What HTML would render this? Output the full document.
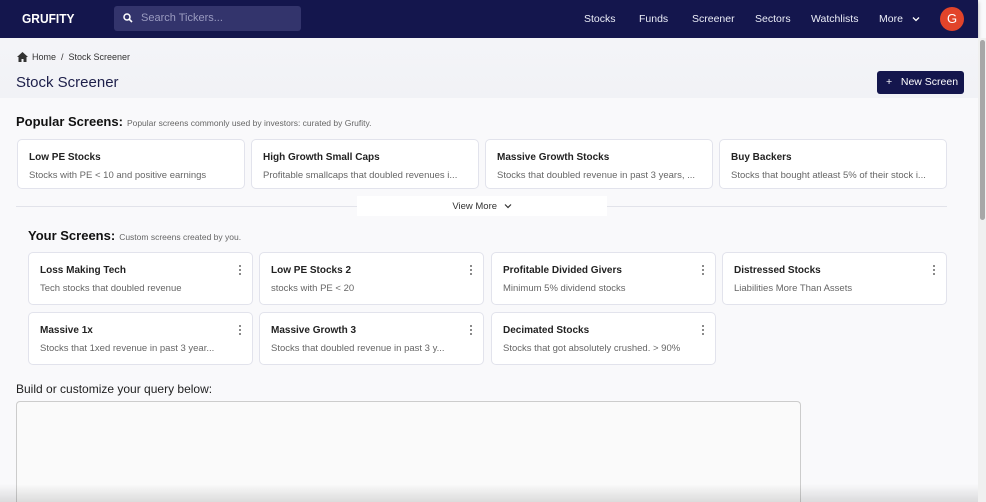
<!DOCTYPE html><html><head><style>
*{box-sizing:border-box;margin:0;padding:0}
html{width:986px;height:502px;overflow:hidden}
body{width:986px;height:502px;overflow:hidden;background:#f9f9fb;font-family:"Liberation Sans",sans-serif;position:relative;color:#222}
.nav{position:absolute;left:0;top:0;width:978px;height:38px;background:#14164d;box-shadow:0 2px 4px rgba(0,0,0,.3)}
.logo{position:absolute;left:22px;top:11px;color:#fff;font-weight:bold;font-size:13px;letter-spacing:0;transform:scaleX(.92);transform-origin:left}
.search{position:absolute;left:114px;top:6px;width:187px;height:25px;background:#33346c;border-radius:3px;color:#9a9bc0;font-size:11px;padding:6px 0 0 27px}
.nl{position:absolute;top:13px;color:#eceef8;font-size:10.5px}
.av{position:absolute;left:940px;top:7px;width:24px;height:24px;border-radius:50%;background:#e2442a;color:#fff;font-size:13px;text-align:center;line-height:24px}
.hdr{position:absolute;left:0;top:38px;width:978px;height:60px;background:linear-gradient(#f4f4f8,#f1f2f6)}
.crumb{position:absolute;left:32px;top:52px;font-size:9px;color:#333}
h1{position:absolute;left:16px;top:74px;font-size:15px;font-weight:normal;color:#1d1f4a}
.btn{position:absolute;left:877px;top:71px;width:87px;height:23px;background:#14164d;color:#fff;font-size:10.5px;border-radius:3px;padding:5px 0 0 9px}
.sec{position:absolute;font-size:13px;font-weight:bold;color:#111}
.sec span{font-size:8.5px;font-weight:normal;color:#666;margin-left:4px}
.card{position:absolute;background:#fff;border:1px solid #e2e3ec;border-radius:5px;padding:0 11px}
.card b{display:block;font-size:10px;color:#222;margin-top:12px}
.card p{font-size:9.5px;color:#666;margin-top:7px;white-space:nowrap;overflow:hidden}
.dots{position:absolute;right:10px;top:12px;width:3px}
.dots i{display:block;width:2px;height:2px;background:#666;border-radius:50%;margin-bottom:2px}
.sb{position:absolute;left:978px;top:38px;width:8px;height:464px;background:#f0f0f0}
.th{position:absolute;left:980px;top:40px;width:5px;height:180px;background:#a7a7a7;border-radius:3px}
</style></head><body>
<div class="nav">
<div class="logo">GRUFITY</div>
<div class="search"><svg style="position:absolute;left:9px;top:7px" width="10" height="10" viewBox="0 0 10 10"><circle cx="4" cy="4" r="3" stroke="#fff" stroke-width="1.5" fill="none"/><path d="M6.2 6.2 9 9" stroke="#fff" stroke-width="1.6"/></svg>Search Tickers...</div>
<div class="nl" style="left:584px">Stocks</div><div class="nl" style="left:639px">Funds</div><div class="nl" style="left:692px">Screener</div><div class="nl" style="left:755px">Sectors</div><div class="nl" style="left:811px">Watchlists</div><div class="nl" style="left:879px">More <svg width="8" height="6" viewBox="0 0 8 6" style="margin-left:6px"><path d="M1 1.5 4 4.5 7 1.5" stroke="#fff" stroke-width="1.3" fill="none"/></svg></div>
<div class="av">G</div>
</div>
<div class="hdr"></div>
<svg style="position:absolute;left:17px;top:52px" width="11" height="10" viewBox="0 0 11 10"><path d="M5.5 0 0 5h1.5v5h3V7h2v3h3V5H11z" fill="#333"/></svg>
<div class="crumb">Home &nbsp;/&nbsp; Stock Screener</div>
<h1>Stock Screener</h1>
<div class="btn">+&nbsp;&nbsp; New Screen</div>
<div class="sec" style="left:16px;top:114px">Popular Screens:<span>Popular screens commonly used by investors: curated by Grufity.</span></div>
<div class="card" style="left:17px;top:139px;width:228px;height:50px"><b>Low PE Stocks</b><p>Stocks with PE &lt; 10 and positive earnings</p></div>
<div class="card" style="left:251px;top:139px;width:228px;height:50px"><b>High Growth Small Caps</b><p>Profitable smallcaps that doubled revenues i...</p></div>
<div class="card" style="left:485px;top:139px;width:228px;height:50px"><b>Massive Growth Stocks</b><p>Stocks that doubled revenue in past 3 years, ...</p></div>
<div class="card" style="left:719px;top:139px;width:228px;height:50px"><b>Buy Backers</b><p>Stocks that bought atleast 5% of their stock i...</p></div>
<div style="position:absolute;left:16px;top:206px;width:931px;height:1px;background:#e2e3ea"></div>
<div style="position:absolute;left:357px;top:196px;width:250px;height:20px;background:#fff;font-size:9.5px;color:#333;text-align:center;padding-top:5px">View More <svg width="8" height="6" viewBox="0 0 8 6" style="margin-left:4px"><path d="M1 1.5 4 4.5 7 1.5" stroke="#333" stroke-width="1.2" fill="none"/></svg></div>
<div class="sec" style="left:28px;top:228px">Your Screens:<span>Custom screens created by you.</span></div>
<div class="card" style="left:28px;top:252px;width:225px;height:53px"><b>Loss Making Tech</b><p>Tech stocks that doubled revenue</p><div class="dots"><i></i><i></i><i></i></div></div>
<div class="card" style="left:259px;top:252px;width:225px;height:53px"><b>Low PE Stocks 2</b><p>stocks with PE &lt; 20</p><div class="dots"><i></i><i></i><i></i></div></div>
<div class="card" style="left:491px;top:252px;width:225px;height:53px"><b>Profitable Divided Givers</b><p>Minimum 5% dividend stocks</p><div class="dots"><i></i><i></i><i></i></div></div>
<div class="card" style="left:722px;top:252px;width:225px;height:53px"><b>Distressed Stocks</b><p>Liabilities More Than Assets</p><div class="dots"><i></i><i></i><i></i></div></div>
<div class="card" style="left:28px;top:312px;width:225px;height:53px"><b>Massive 1x</b><p>Stocks that 1xed revenue in past 3 year...</p><div class="dots"><i></i><i></i><i></i></div></div>
<div class="card" style="left:259px;top:312px;width:225px;height:53px"><b>Massive Growth 3</b><p>Stocks that doubled revenue in past 3 y...</p><div class="dots"><i></i><i></i><i></i></div></div>
<div class="card" style="left:491px;top:312px;width:225px;height:53px"><b>Decimated Stocks</b><p>Stocks that got absolutely crushed. &gt; 90%</p><div class="dots"><i></i><i></i><i></i></div></div>
<div style="position:absolute;left:16px;top:382px;font-size:12px;color:#222">Build or customize your query below:</div>
<div style="position:absolute;left:16px;top:401px;width:785px;height:101px;background:#fafafa;border:1px solid #ccc;border-bottom:none;border-radius:4px 4px 0 0"></div>
<div style="position:absolute;left:0;top:484px;width:986px;height:18px;background:linear-gradient(rgba(0,0,0,0),rgba(0,0,0,.12))"></div>
<div class="sb"></div><div class="th"></div>
</body></html>
